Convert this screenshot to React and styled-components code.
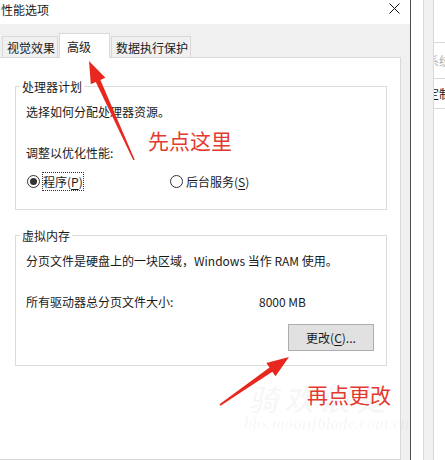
import styled, { createGlobalStyle } from "styled-components";

const GlobalStyle = createGlobalStyle`
  html, body {
    margin: 0;
    padding: 0;
    background: #fff;
  }
  body {
    font-family: "Noto Sans CJK SC", "Noto Sans", sans-serif;
    font-size: 12px;
    color: #1a1a1a;
  }
`;

const Screen = styled.div`
  position: relative;
  display: flex;
  width: 445px;
  height: 460px;
  overflow: hidden;
`;

const Dialog = styled.div`
  display: flex;
  flex-direction: column;
  width: 410px;
  border-right: 1px solid #4d4d4d;
  flex-shrink: 0;
`;

const TitleBar = styled.div`
  display: flex;
  justify-content: space-between;
  align-items: flex-start;
  height: 24px;
  background: #fff;
  padding-left: 1px;
`;

const Title = styled.div`
  line-height: 17px;
  padding-top: 1px;
`;

const CloseIcon = styled.svg`
  width: 11px;
  height: 11px;
  margin: 3px 10px 0 0;
`;

const Body = styled.div`
  flex: 1;
  display: flex;
  flex-direction: column;
  background: #f0f0f0;
  padding: 9px 9px 0 0;
`;

const TabStrip = styled.div`
  display: flex;
  align-items: flex-end;
  height: 24px;
  padding-left: 2px;
`;

const Tab = styled.div`
  position: relative;
  display: flex;
  align-items: center;
  box-sizing: border-box;
  height: ${(p) => (p.$active ? "25px" : "21px")};
  margin-bottom: ${(p) => (p.$active ? "-1px" : "0")};
  width: ${(p) => p.$w}px;
  padding-left: ${(p) => p.$pl}px;
  background: ${(p) => (p.$active ? "#fff" : "#f0f0f0")};
  border: 1px solid #d9d9d9;
  border-bottom: none;
  z-index: ${(p) => (p.$active ? 1 : 0)};
  line-height: 17px;
  margin-right: 1px;
`;

const TabPanel = styled.div`
  flex: 1;
  background: #fff;
  border: 1px solid #d9d9d9;
  border-left: none;
`;

const GroupBox = styled.fieldset`
  margin: ${(p) => p.$top}px 13px 0 15px;
  padding: 0 0 ${(p) => p.$bottom}px 10px;
  border: 1px solid #dcdcdc;
  min-width: 0;
`;

const GroupTitle = styled.legend`
  margin-left: -6px;
  padding: 0 2px;
  line-height: 17px;
`;

const Line = styled.div`
  display: flex;
  align-items: center;
  line-height: 17px;
  margin-top: ${(p) => p.$gap}px;
`;

const SizeLabel = styled.span`
  width: 233px;
`;

const RadioItem = styled.label`
  display: flex;
  align-items: center;
  width: ${(p) => (p.$w ? `${p.$w}px` : "auto")};
  margin-left: ${(p) => p.$ml || 0}px;
`;

const RadioDot = styled.span`
  position: relative;
  box-sizing: border-box;
  width: 13px;
  height: 13px;
  border: 1px solid #333;
  border-radius: 50%;
  background: #fff;
  margin-right: 3px;

  &::after {
    content: "";
    display: ${(p) => (p.$checked ? "block" : "none")};
    position: absolute;
    left: 2px;
    top: 2px;
    width: 7px;
    height: 7px;
    border-radius: 50%;
    background: #333;
  }
`;

const RadioText = styled.span`
  outline: ${(p) => (p.$focus ? "1px dotted #333" : "none")};
  outline-offset: 0;
`;

const Key = styled.u`
  text-underline-offset: 2px;
`;

const Button = styled.button`
  display: flex;
  align-items: center;
  justify-content: center;
  width: 86px;
  height: 27px;
  margin: 14px 12px 0 auto;
  background: #e1e1e1;
  border: 1px solid #adadad;
  font: inherit;
  color: #1a1a1a;
  padding: 0;
`;

/* window peeking out behind the dialog */
const BehindWindow = styled.div`
  flex: 1;
  display: flex;
`;

const EdgeStrip = styled.div`
  width: ${(p) => p.$w}px;
  flex-shrink: 0;
  background: ${(p) => p.$bg};
  border-right: ${(p) => (p.$line ? "1px solid #dadada" : "none")};
`;

const ListPane = styled.div`
  flex: 1;
  overflow: hidden;
  white-space: nowrap;
`;

const ListRow = styled.div`
  height: ${(p) => p.$h}px;
  box-sizing: border-box;
  border-bottom: ${(p) => (p.$line ? "1px solid #d8d8d8" : "none")};
  display: flex;
  align-items: center;
  color: ${(p) => p.$color || "#1a1a1a"};
  margin-left: -7px;
`;

const Note = styled.div`
  position: absolute;
  left: ${(p) => p.$x}px;
  top: ${(p) => p.$y}px;
  font-size: 21px;
  line-height: 21px;
  color: #e33a2f;
  white-space: nowrap;
`;

const Watermark = styled.div`
  position: absolute;
  left: ${(p) => p.$x}px;
  top: ${(p) => p.$y}px;
  font-family: "Liberation Serif", "Noto Sans CJK SC", serif;
  font-style: italic;
  font-weight: bold;
  font-size: ${(p) => p.$size}px;
  letter-spacing: ${(p) => p.$ls || 0}px;
  color: rgba(0, 0, 0, 0.035);
  white-space: nowrap;
`;

const Arrows = styled.svg`
  position: absolute;
  left: 0;
  top: 0;
  pointer-events: none;
`;

export default function App() {
  return (
    <>
      <GlobalStyle />
      <Screen>
        <Dialog>
          <TitleBar>
            <Title>性能选项</Title>
            <CloseIcon viewBox="0 0 11 11">
              <path d="M0.5 0.5 L10.5 10.5 M10.5 0.5 L0.5 10.5" stroke="#111" strokeWidth="1" />
            </CloseIcon>
          </TitleBar>
          <Body>
            <TabStrip>
              <Tab $w={56} $pl={4}>视觉效果</Tab>
              <Tab $active $w={51} $pl={7}>高级</Tab>
              <Tab $w={80} $pl={4}>数据执行保护</Tab>
            </TabStrip>
            <TabPanel>
              <GroupBox $top={20} $bottom={19}>
                <GroupTitle>处理器计划</GroupTitle>
                <Line $gap={8}>选择如何分配处理器资源。</Line>
                <Line $gap={24}>调整以优化性能:</Line>
                <Line $gap={12}>
                  <RadioItem $w={143} $ml={1}>
                    <RadioDot $checked />
                    <RadioText $focus>
                      程序(<Key>P</Key>)
                    </RadioText>
                  </RadioItem>
                  <RadioItem>
                    <RadioDot />
                    <RadioText>
                      后台服务(<Key>S</Key>)
                    </RadioText>
                  </RadioItem>
                </Line>
              </GroupBox>
              <GroupBox $top={17} $bottom={14}>
                <GroupTitle>虚拟内存</GroupTitle>
                <Line $gap={8}>分页文件是硬盘上的一块区域，Windows 当作 RAM 使用。</Line>
                <Line $gap={24}>
                  <SizeLabel>所有驱动器总分页文件大小:</SizeLabel>
                  <span>8000 MB</span>
                </Line>
                <Button>
                  更改(<Key>C</Key>)...
                </Button>
              </GroupBox>
            </TabPanel>
          </Body>
        </Dialog>
        <BehindWindow>
          <EdgeStrip $w={12} $bg="#fff" $line />
          <EdgeStrip $w={9} $bg="#f0f0f0" $line />
          <ListPane>
            <ListRow $h={43} $line />
            <ListRow $h={36} $line $color="#b0b0b0">系统</ListRow>
            <ListRow $h={30} $line>定制</ListRow>
          </ListPane>
        </BehindWindow>

        <Watermark $x={248} $y={376} $size={30} $ls={6}>骑欢浪处</Watermark>
        <Watermark $x={244} $y={414} $size={17}>bbs.moonfblade.com.cn</Watermark>

        <Note $x={148} $y={130}>先点这里</Note>
        <Note $x={307} $y={384}>再点更改</Note>

        <Arrows width="445" height="460" viewBox="0 0 445 460">
          <polygon
            fill="#e8281e"
            points="134.7,159.7 100.4,80.0 105.4,77.7 89,61 90.8,84.3 95.8,82.0 133.3,160.3"
          />
          <polygon
            fill="#e8281e"
            points="220.5,405.7 272.3,371.7 275.5,376.2 289,357 266.3,363.0 269.5,367.5 219.5,404.3"
          />
        </Arrows>
      </Screen>
    </>
  );
}
